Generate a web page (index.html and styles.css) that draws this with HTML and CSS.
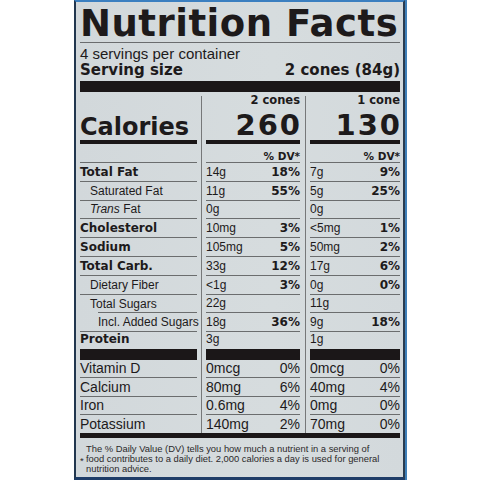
FILE: index.html
```html
<!DOCTYPE html>
<html lang="en">
<head>
<meta charset="utf-8">
<title>Nutrition Facts</title>
<link rel="stylesheet" href="styles.css">
</head>
<body>
<div class="label">
  <h1 class="title">Nutrition Facts</h1>
  <p class="servings">4 servings per container</p>
  <p class="serving-size"><span>Serving size</span><span>2 cones (84g)</span></p>
  <div class="bar-thick"></div>

  <div class="grid">
    <div class="vline vline-1"></div>
    <div class="vline vline-2"></div>

    <div class="cell c1 cal-row cal-label">Calories</div>
    <div class="cell c2 cal-row cal-val"><span class="per">2 cones</span><span class="kcal">260</span></div>
    <div class="cell c3 cal-row cal-val"><span class="per">1 cone</span><span class="kcal">130</span></div>

    <div class="cell c1 dv-row"></div>
    <div class="cell c2 dv-row">% DV*</div>
    <div class="cell c3 dv-row">% DV*</div>

    <div class="cell c1 b">Total Fat</div>
    <div class="cell c2"><span>14g</span><span class="b">18%</span></div>
    <div class="cell c3"><span>7g</span><span class="b">9%</span></div>

    <div class="cell c1 sub">Saturated Fat</div>
    <div class="cell c2"><span>11g</span><span class="b">55%</span></div>
    <div class="cell c3"><span>5g</span><span class="b">25%</span></div>

    <div class="cell c1 sub"><span><em>Trans</em> Fat</span></div>
    <div class="cell c2"><span>0g</span></div>
    <div class="cell c3"><span>0g</span></div>

    <div class="cell c1 b">Cholesterol</div>
    <div class="cell c2"><span>10mg</span><span class="b">3%</span></div>
    <div class="cell c3"><span>&lt;5mg</span><span class="b">1%</span></div>

    <div class="cell c1 b">Sodium</div>
    <div class="cell c2"><span>105mg</span><span class="b">5%</span></div>
    <div class="cell c3"><span>50mg</span><span class="b">2%</span></div>

    <div class="cell c1 b">Total Carb.</div>
    <div class="cell c2"><span>33g</span><span class="b">12%</span></div>
    <div class="cell c3"><span>17g</span><span class="b">6%</span></div>

    <div class="cell c1 sub">Dietary Fiber</div>
    <div class="cell c2"><span>&lt;1g</span><span class="b">3%</span></div>
    <div class="cell c3"><span>0g</span><span class="b">0%</span></div>

    <div class="cell c1 sub short-rule">Total Sugars</div>
    <div class="cell c2"><span>22g</span></div>
    <div class="cell c3"><span>11g</span></div>

    <div class="cell c1 sub2">Incl. Added Sugars</div>
    <div class="cell c2"><span>18g</span><span class="b">36%</span></div>
    <div class="cell c3"><span>9g</span><span class="b">18%</span></div>

    <div class="cell c1 b protein">Protein</div>
    <div class="cell c2 protein"><span>3g</span></div>
    <div class="cell c3 protein"><span>1g</span></div>

    <div class="cell c1 lo">Vitamin D</div>
    <div class="cell c2 lo"><span>0mcg</span><span>0%</span></div>
    <div class="cell c3 lo"><span>0mcg</span><span>0%</span></div>

    <div class="cell c1 lo">Calcium</div>
    <div class="cell c2 lo"><span>80mg</span><span>6%</span></div>
    <div class="cell c3 lo"><span>40mg</span><span>4%</span></div>

    <div class="cell c1 lo">Iron</div>
    <div class="cell c2 lo"><span>0.6mg</span><span>4%</span></div>
    <div class="cell c3 lo"><span>0mg</span><span>0%</span></div>

    <div class="cell c1 lo last">Potassium</div>
    <div class="cell c2 lo last"><span>140mg</span><span>2%</span></div>
    <div class="cell c3 lo last"><span>70mg</span><span>0%</span></div>
  </div>

  <div class="bar-mid"></div>

  <div class="footnote">
    <span class="star">*</span>
    <p>The % Daily Value (DV) tells you how much a nutrient in a serving of<br>food contributes to a daily diet. 2,000 calories a day is used for general<br>nutrition advice.</p>
  </div>
</div>
</body>
</html>
```

FILE: styles.css
```css
* {
  box-sizing: border-box;
}

html,
body {
  margin: 0;
  padding: 0;
  background: #ffffff;
}

body {
  font-family: "Liberation Sans", Arial, sans-serif;
  color: #1d1a1b;
}

.label {
  margin-left: 74px;
  width: 331px;
  height: 480px;
  background: linear-gradient(90deg, #d2d8db 0%, #d6dcde 60%, #d3d9dc 100%);
  border-left: 2px solid #22374f;
  border-right: 2px solid #2a3c50;
  border-top: 2px solid #3b7fc0;
  border-bottom: 3px solid #1f3d68;
  padding: 0 3px 0 4px;
  box-shadow: 2px 0 0 #3f7fb8;
}

.title {
  margin: 4px 0 0;
  height: 37px;
  font-family: "DejaVu Sans", sans-serif;
  font-weight: bold;
  font-size: 37px;
  line-height: 36px;
  letter-spacing: 0.5px;
  white-space: nowrap;
  border-bottom: 1px solid #6a6c6e;
}

.servings {
  margin: 0;
  padding-top: 2px;
  font-size: 15px;
  line-height: 17px;
}

.serving-size {
  margin: 0;
  height: 16px;
  display: flex;
  justify-content: space-between;
  font-family: "DejaVu Sans", sans-serif;
  font-weight: bold;
  font-size: 15px;
  line-height: 16px;
}

.bar-thick {
  margin-top: 3px;
  height: 11px;
  background: #1b1718;
}

.grid {
  margin-top: 4px;
  display: grid;
  grid-template-columns: 117px 9px 94px 10px 90px;
  grid-template-rows: 48px 19px repeat(9, 18.8px) 27.8px repeat(3, 18.5px) 17.8px;
}

.vline {
  grid-row: 1 / -1;
  justify-self: center;
  width: 1px;
  background: #767879;
}

.vline-1 {
  grid-column: 2;
}

.vline-2 {
  grid-column: 4;
}

.c1 {
  grid-column: 1;
}

.c2 {
  grid-column: 3;
}

.c3 {
  grid-column: 5;
}

.cell {
  display: flex;
  align-items: center;
  justify-content: space-between;
  white-space: nowrap;
  font-size: 12px;
  line-height: 16px;
  border-bottom: 1px solid #6b6d6e;
}

.b {
  font-family: "DejaVu Sans", sans-serif;
  font-weight: bold;
  font-size: 12px;
}

.sub {
  padding-left: 10px;
}

.sub2 {
  padding-left: 18px;
}

.short-rule {
  border-bottom: none;
  background: linear-gradient(#6b6d6e, #6b6d6e) no-repeat right bottom / calc(100% - 18px) 1px;
}

.cal-row {
  border-bottom: 4px solid #1b1718;
}

.cal-label {
  align-items: flex-end;
  padding-bottom: 1px;
  font-family: "DejaVu Sans", sans-serif;
  font-weight: bold;
  font-size: 24px;
  line-height: 24px;
}

.cal-val {
  flex-direction: column;
  align-items: flex-end;
  justify-content: flex-start;
  font-family: "DejaVu Sans", sans-serif;
  font-weight: bold;
}

.per {
  font-size: 11.5px;
  line-height: 9px;
}

.kcal {
  margin-top: 5.5px;
  margin-right: -2px;
  font-size: 29px;
  line-height: 28px;
  letter-spacing: 2px;
}

.dv-row {
  justify-content: flex-end;
  align-items: flex-end;
  font-family: "DejaVu Sans", sans-serif;
  font-weight: bold;
  font-size: 10.5px;
  line-height: 12px;
}

.protein {
  align-items: flex-start;
  line-height: 15px;
  border-bottom: 11px solid #1b1718;
}

.lo {
  font-size: 14px;
  line-height: 17px;
}

.last {
  border-bottom: none;
}

.bar-mid {
  height: 5px;
  background: #1b1718;
}

.footnote {
  display: flex;
  align-items: center;
  padding-top: 6px;
  color: #2b292a;
}

.star {
  width: 6px;
  flex: none;
  font-size: 9.5px;
  line-height: 10px;
  padding-top: 3px;
}

.footnote p {
  margin: 0;
  font-size: 9.4px;
  line-height: 10px;
  white-space: nowrap;
}
```
